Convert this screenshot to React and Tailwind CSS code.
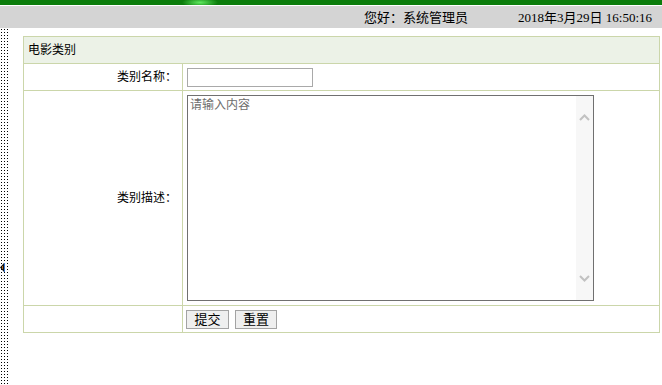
import React from 'react';

const cjk = "font-['Liberation_Sans','Noto_Sans_CJK_SC',sans-serif]";

export default function App() {
  return (
    <div className={`w-[662px] h-[385px] overflow-hidden bg-white text-black ${cjk}`}>
      {/* Top bar */}
      <div className="h-[5px] bg-[radial-gradient(ellipse_18px_5px_at_200px_50%,#5fe85f_0,#0b7d0b_100%)]"></div>
      <div className="h-px bg-white"></div>
      <div className="h-[22px] bg-[#d4d4d4] flex items-center justify-end pr-[10px] text-[13px] leading-none">
        <span>您好：系统管理员</span>
        <span className="ml-[50px] font-['Liberation_Serif','Noto_Sans_CJK_SC',serif]">2018年3月29日 16:50:16</span>
      </div>

      <div className="flex h-[357px]">
        {/* Dotted splitter */}
        <div className="w-[9px] h-full flex items-center bg-[radial-gradient(circle,#000_0.6px,transparent_0.7px)] bg-[length:3px_3px]">
          <svg width="5" height="9" viewBox="0 0 5 9" className="mt-[122px]">
            <polygon points="4,0 0,4.5 4,9" fill="#111" />
            <rect x="2" y="3" width="1" height="3" fill="#b5651d" />
            <rect x="4" y="0" width="1" height="9" fill="#3a7bd5" />
          </svg>
        </div>

        {/* Main content */}
        <div className="pl-[14px] pt-[8px]">
          <div className="w-[637px] border border-[#cbd6aa] text-[12px]">
            <div className="h-[27px] bg-[#ecf2e7] flex items-center pl-[4px] border-b border-[#cbd6aa]">电影类别</div>

            <div className="flex h-[27px] border-b border-[#cbd6aa]">
              <div className="w-[159px] border-r border-[#cbd6aa] flex items-center justify-end pr-[5px]">类别名称：</div>
              <div className="flex-1 pl-[4px] pt-[4px]">
                <input type="text" className="w-[126px] h-[19px] border border-[#a9a9a9] outline-none" />
              </div>
            </div>

            <div className="flex h-[215px] border-b border-[#cbd6aa]">
              <div className="w-[159px] border-r border-[#cbd6aa] flex items-center justify-end pr-[5px]">类别描述：</div>
              <div className="flex-1 pl-[4px] pt-[4px]">
                <div className="w-[407px] h-[206px] border border-[#707070] flex">
                  <div className="flex-1 pl-[2px] pt-[2px] text-[12px] leading-[15px] text-[#6d6d6d]">请输入内容</div>
                  <div className="w-[17px] bg-[#f7f7f7] flex flex-col justify-between items-center py-[18px]">
                    <svg width="11" height="7" viewBox="0 0 11 7">
                      <polyline points="1,6 5.5,1.5 10,6" fill="none" stroke="#c2c2c2" strokeWidth="2" />
                    </svg>
                    <svg width="11" height="7" viewBox="0 0 11 7">
                      <polyline points="1,1 5.5,5.5 10,1" fill="none" stroke="#c2c2c2" strokeWidth="2" />
                    </svg>
                  </div>
                </div>
              </div>
            </div>

            <div className="flex h-[26px]">
              <div className="w-[159px] border-r border-[#cbd6aa]"></div>
              <div className="flex-1 pl-[3px] pt-[4px] flex gap-[6px] items-start">
                <button className="w-[43px] h-[19px] bg-[#efefef] border border-[#a3a3a3] text-[13px] leading-none">提交</button>
                <button className="w-[42px] h-[19px] bg-[#efefef] border border-[#a3a3a3] text-[13px] leading-none">重置</button>
              </div>
            </div>
          </div>
        </div>
      </div>
    </div>
  );
}
